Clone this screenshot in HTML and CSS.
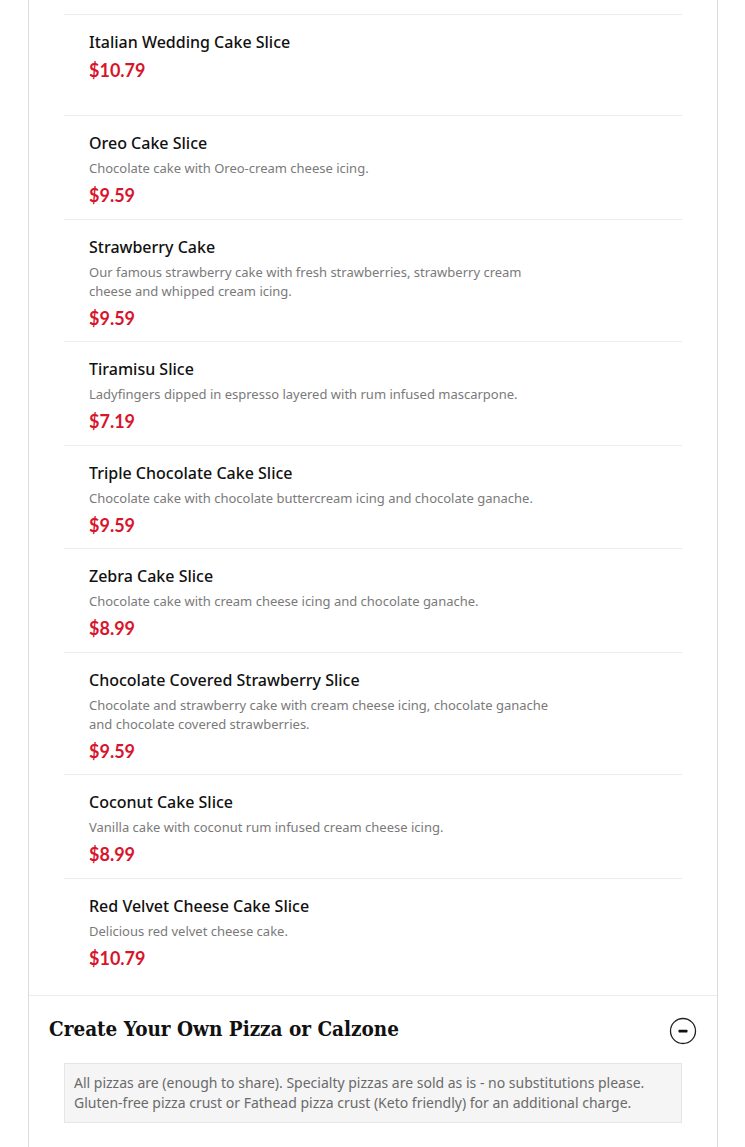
FILE: index.html
```html
<!DOCTYPE html>
<html lang="en">
<head>
<meta charset="utf-8">
<title>Menu</title>
<link rel="stylesheet" href="styles.css">
</head>
<body>
<div class="card">
  <section class="category">
    <ul class="items">
      <li class="item item-tall">
        <h3 class="name">Italian Wedding Cake Slice</h3>
        <div class="price">$10.79</div>
      </li>
      <li class="item">
        <h3 class="name">Oreo Cake Slice</h3>
        <p class="desc">Chocolate cake with Oreo-cream cheese icing.</p>
        <div class="price">$9.59</div>
      </li>
      <li class="item">
        <h3 class="name">Strawberry Cake</h3>
        <p class="desc">Our famous strawberry cake with fresh strawberries, strawberry cream cheese and whipped cream icing.</p>
        <div class="price">$9.59</div>
      </li>
      <li class="item">
        <h3 class="name">Tiramisu Slice</h3>
        <p class="desc">Ladyfingers dipped in espresso layered with rum infused mascarpone.</p>
        <div class="price">$7.19</div>
      </li>
      <li class="item">
        <h3 class="name">Triple Chocolate Cake Slice</h3>
        <p class="desc">Chocolate cake with chocolate buttercream icing and chocolate ganache.</p>
        <div class="price">$9.59</div>
      </li>
      <li class="item">
        <h3 class="name">Zebra Cake Slice</h3>
        <p class="desc">Chocolate cake with cream cheese icing and chocolate ganache.</p>
        <div class="price">$8.99</div>
      </li>
      <li class="item">
        <h3 class="name">Chocolate Covered Strawberry Slice</h3>
        <p class="desc">Chocolate and strawberry cake with cream cheese icing, chocolate ganache and chocolate covered strawberries.</p>
        <div class="price">$9.59</div>
      </li>
      <li class="item">
        <h3 class="name">Coconut Cake Slice</h3>
        <p class="desc">Vanilla cake with coconut rum infused cream cheese icing.</p>
        <div class="price">$8.99</div>
      </li>
      <li class="item">
        <h3 class="name">Red Velvet Cheese Cake Slice</h3>
        <p class="desc">Delicious red velvet cheese cake.</p>
        <div class="price">$10.79</div>
      </li>
    </ul>
  </section>
  <section class="category category-open">
    <div class="cat-head">
      <h2 class="cat-title">Create Your Own Pizza or Calzone</h2>
      <span class="toggle" aria-label="collapse">
        <svg width="28" height="28" viewBox="0 0 28 28"><circle cx="14" cy="14" r="12.5" fill="none" stroke="#222" stroke-width="1.3"/><rect x="9.5" y="12.8" width="9" height="2.6" rx="0.6" fill="#111"/></svg>
      </span>
    </div>
    <div class="note">All pizzas are (enough to share). Specialty pizzas are sold as is - no substitutions please. Gluten-free pizza crust or Fathead pizza crust (Keto friendly) for an additional charge.</div>
  </section>
</div>
</body>
</html>
```
FILE: styles.css
```css
* { box-sizing: border-box; }
html, body { margin: 0; padding: 0; background: #fff; }
body {
  font-family: "Noto Sans", "Open Sans", sans-serif;
  color: #111;
  padding: 0 27px 0 28px;
}
.card {
  border-left: 1px solid #dcdcdc;
  border-right: 1px solid #dcdcdc;
}
.category { padding: 14px 35px 0 35px; }
.items { list-style: none; margin: 0; padding: 0; border-top: 1px solid #ececec; }
.item {
  padding: 16px 25px 11.5px;
  border-bottom: 1px solid #ececec;
}
.item:last-child { border-bottom: none; padding-bottom: 25px; }
.item-tall { padding-bottom: 33px; }
.name {
  margin: 0;
  font-size: 16px;
  line-height: 22px;
  font-weight: 500;
  color: #111;
}
.desc {
  margin: 5px 0 0;
  font-size: 13px;
  line-height: 19px;
  color: #7a7a7a;
  max-width: 470px;
}
.price {
  margin-top: 5px;
  font-family: "Lato", sans-serif;
  font-weight: 700;
  font-size: 18px;
  line-height: 24px;
  color: #d8152c;
}
.category-open {
  border-top: 1px solid #ececec;
  padding: 17px 20px 30px 20px;
}
.cat-head {
  display: flex;
  align-items: center;
  justify-content: space-between;
}
.cat-title {
  margin: 0;
  font-family: "DejaVu Serif", serif;
  font-stretch: condensed;
  font-weight: 700;
  font-size: 20.5px;
  line-height: 28px;
  color: #111;
}
.toggle { display: flex; margin-top: 4px; }
.note {
  margin: 18px 15px 0;
  background: #f5f5f5;
  border: 1px solid #e6e6e6;
  padding: 9px 9px 9px 9px;
  font-size: 14px;
  line-height: 20px;
  color: #6a6a6a;
}
```
